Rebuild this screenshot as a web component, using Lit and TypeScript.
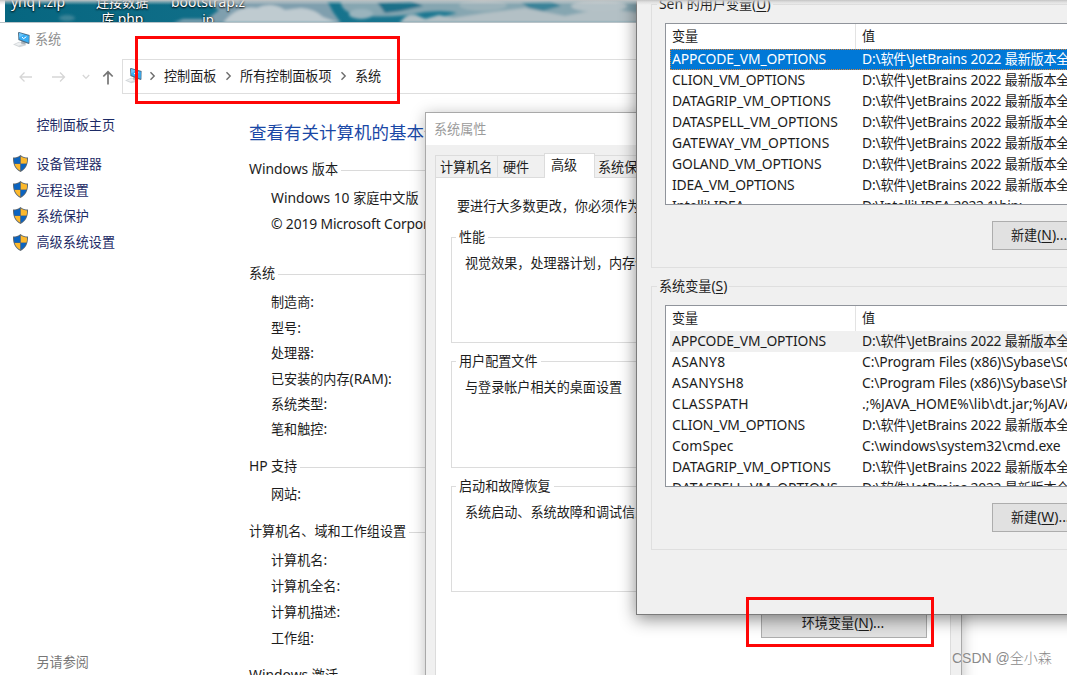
import { LitElement, html, css, svg } from "lit";
import { customElement, property } from "lit/decorators.js";

/* Sets Latin stretches slightly larger than the Chinese characters beside them. */
const mixed = (text: string) =>
  text
    .split(/([\x20-\x7e©]+)/)
    .filter((s) => s)
    .map((s) => (/^[\x20-\x7e©]/.test(s) ? html`<span class="en">${s}</span>` : s));

/* A single line of text whose tracking is adjusted to fill a known width. */
@customElement("text-run")
class TextRun extends LitElement {
  @property({ type: Number }) w = 0;
  @property() text = "";
  static styles = css`
    :host { display: inline-block; white-space: pre; }
    .run { display: inline-block; }
    .en { font-size: 1.06em; line-height: 1; }
  `;
  firstUpdated() {
    const run = this.renderRoot.querySelector(".run") as HTMLElement;
    const fit = () => {
      run.style.letterSpacing = "0px";
      const natural = run.getBoundingClientRect().width;
      if (this.w && this.text.length) run.style.letterSpacing = `${(this.w - natural) / this.text.length}px`;
    };
    fit();
    document.fonts?.ready.then(fit);
  }
  render() {
    return html`<span class="run">${mixed(this.text)}</span>`;
  }
}

const shield = svg`
  <path d="M8.5 1 C6.5 2.8 3.8 3.6 1 3.6 C.8 10 2.6 15 8.5 18 C14.4 15 16.2 10 16 3.6 C13.2 3.6 10.5 2.8 8.5 1Z" fill="#5b6670"/>
  <path d="M8.2 2.3 C6.5 3.7 4.3 4.4 2 4.5 C1.9 6.4 2 8 2.5 9.6 H8.2Z" fill="#0b64c0"/>
  <path d="M8.8 2.3 C10.5 3.7 12.7 4.4 15 4.5 C15.1 6.4 15 8 14.5 9.6 H8.8Z" fill="#fdb92c"/>
  <path d="M2.6 10 H8.2 V16.8 C5.4 15.3 3.5 13 2.6 10Z" fill="#fdb92c"/>
  <path d="M14.4 10 H8.8 V16.8 C11.6 15.3 13.5 13 14.4 10Z" fill="#0b64c0"/>`;

const computer = html`<svg class="pc" viewBox="0 0 18 17">
  <path d="M0 13.4 L6 10.7 L13.5 12.6 L12.6 14.4 L6.4 16.2Z" fill="#d3d7da"/>
  <path d="M2 13.3 L6.3 11.6 L10.4 12.7 L5.6 14.7Z" fill="#eef0f1"/>
  <path d="M8.5 9.7 L13 10.8 L12 13.6 L8 12.6Z" fill="#a9b2b9"/>
  <path d="M5 1.4 L6 1 L16.6 4 L16.4 12.4 L15.6 12.9 L5.4 9Z" fill="#4d6e86"/>
  <path d="M6 2.1 L15.9 4.8 L15.7 11.8 L6.3 8.3Z" fill="#37aef5"/>
  <path d="M6 2.1 L11 3.5 L6.3 6.4Z" fill="#6cc6fa"/>
  <path d="M9 5.9 L10.5 7.7 L13.4 5.7" fill="none" stroke="#fff" stroke-width="1"/>
</svg>`;

const chevron = html`<svg class="chev" viewBox="0 0 7 10"><path d="M1.5 1.2 L5.2 5 L1.5 8.8" /></svg>`;

type Row = [string, number, string, number];
const JB = "D:\\软件\\JetBrains 2022 最新版本全家桶";
const userVars: Row[] = [
  ["APPCODE_VM_OPTIONS", 154, JB, 233],
  ["CLION_VM_OPTIONS", 133, JB, 233],
  ["DATAGRIP_VM_OPTIONS", 159, JB, 233],
  ["DATASPELL_VM_OPTIONS", 166, JB, 233],
  ["GATEWAY_VM_OPTIONS", 157.5, JB, 233],
  ["GOLAND_VM_OPTIONS", 149.5, JB, 233],
  ["IDEA_VM_OPTIONS", 122.5, JB, 233],
  ["IntelliJ IDEA", 72, "D:\\IntelliJ IDEA 2022.1\\bin;", 160],
];
const systemVars: Row[] = [
  ["APPCODE_VM_OPTIONS", 154, JB, 233],
  ["ASANY8", 53.5, "C:\\Program Files (x86)\\Sybase\\SQL", 219],
  ["ASANYSH8", 72, "C:\\Program Files (x86)\\Sybase\\Shared", 238],
  ["CLASSPATH", 77, ".;%JAVA_HOME%\\lib\\dt.jar;%JAVA_", 217],
  ["CLION_VM_OPTIONS", 133, JB, 233],
  ["ComSpec", 61.5, "C:\\windows\\system32\\cmd.exe", 198.5],
  ["DATAGRIP_VM_OPTIONS", 159, JB, 233],
  ["DATASPELL_VM_OPTIONS", 166, JB, 233],
];

@customElement("app-root")
class AppRoot extends LitElement {
  static styles = css`
    :host {
      display: block; position: relative; width: 1067px; height: 675px; overflow: hidden;
      background: #fff; color: #1c1c1c;
      font: 13.1px/20px "Noto Sans", "Noto Sans CJK SC", sans-serif;
      white-space: nowrap;
    }
    * { box-sizing: border-box; }
    svg { display: block; flex: none; }
    u { text-underline-offset: 2px; text-decoration-thickness: 1px; }
    .en { font-size: 1.06em; line-height: 1; white-space: pre; }

    .desktop { position: absolute; left: 5px; top: 0; width: 640px; height: 23px; overflow: hidden; background: #096a86; }
    .sky { width: 640px; height: 23px; }
    .file { position: absolute; top: -6px; text-align: center; line-height: 17px; color: #fff; text-shadow: 0 1px 2px #000, 0 0 2px #0008; }
    .f1 { left: 6px; } .f2 { left: 91px; } .f3 { left: 166px; }
    .topline { position: absolute; left: 0; top: 0; width: 1067px; height: 5px; background: linear-gradient(#c4c4c4, #d0d0d088 40%, #e4e4e400); }

    .panel { position: absolute; left: 0; top: 22px; width: 1067px; height: 653px; background: #fff; border-top: 1px solid #b9c3c8; }
    .title { display: flex; align-items: center; height: 36px; padding: 0 0 4px 13px; gap: 4px; color: #8f8f8f; }
    .pc { width: 18px; height: 17px; }
    .nav { display: flex; height: 35px; }
    .arrows { display: flex; align-items: center; width: 122px; padding: 1px 0 0 18px; fill: none; stroke: #d6d6d6; stroke-width: 1.3; }
    .arrows .r { margin-left: 19px; } .arrows .d { margin-left: 15px; } .arrows .up { margin-left: 12px; stroke: #767676; stroke-width: 1.7; }
    .address { flex: 1; display: flex; align-items: center; border: 1px solid #dedede; padding: 0 0 2px 2px; }
    .chev { width: 7px; height: 10px; fill: none; stroke: #6c6c6c; stroke-width: 1.4; }
    .crumb { margin: 0 8.5px 0 8px; }
    .address .pc { margin-right: 6px; }
    .body { display: flex; }
    .side { width: 249px; padding: 20.5px 0 0 12px; color: #1d2b66; height: 581px; display: flex; flex-direction: column; }
    .home { padding-left: 24.5px; margin-bottom: 16px; }
    .task { display: flex; align-items: center; gap: 7.5px; height: 26.2px; }
    .task svg { width: 17px; height: 19px; }
    .see { margin-top: auto; padding: 0 0 3px 24.5px; color: #777; }
    .main { flex: 1; padding-top: 26px; }
    h1 { margin: 0 0 15px; font-size: 17.5px; font-weight: 400; line-height: 24px; color: #1a48a6; }
    .group { display: flex; align-items: center; height: 20px; gap: 3px; }
    .group::after { content: ""; flex: 1; height: 1px; background: #dadada; margin-top: 3px; }
    .rows { padding: 6px 0 0 22px; }
    .rows.a { line-height: 26.2px; margin-bottom: 26px; }
    .rows.b { line-height: 25.4px; padding-top: 7px; margin-bottom: 13px; }
    .rows.c { line-height: 25.4px; margin-bottom: 13.5px; }
    .rows.d { line-height: 26.2px; margin-bottom: 13px; }

    .props { position: absolute; left: 425px; top: 112px; width: 537px; height: 580px; border: 1px solid #a9a9a9; background: #f0f0f0; box-shadow: 0 2px 14px #0004; display: flex; flex-direction: column; }
    .ptitle { height: 32px; padding: 6px 8px; background: #fff; color: #9b9b9b; }
    .tabs { display: flex; align-items: flex-end; padding: 9px 0 0 9px; height: 32px; }
    .tab { height: 22px; border: 1px solid #dcdcdc; border-bottom: 0; padding-left: 4px; width: 46px; line-height: 23px; }
    .tab.t1 { width: 63px; } .tab.t4 { width: 80px; padding-left: 3px; border-left: 0; }
    .tab.t2 { border-left: 0; border-right: 0; padding-left: 5px; }
    .tab.on { width: 51px; padding-left: 6px; line-height: 22px; background: #fff; margin-bottom: -1px; height: 25px; position: relative; }
    .page { flex: 1; margin: 0 10px 0 9px; border: 1px solid #dcdcdc; background: #fff; padding: 18px 15px; }
    .page p { margin: 0 0 20.5px 6px; }
    .box { border: 1px solid #dcdcdc; height: 106.5px; margin: 0 0 18px; padding: 0 13px; }
    .box .lab { display: block; width: fit-content; margin: -11px 0 6px -9px; padding: 0 3px; background: #fff; }
    .btn { display: block; border: 1px solid #adadad; background: #e1e1e1; text-align: center; color: #1c1c1c; }
    .page .btn { width: 166px; height: 28px; margin-left: auto; margin-right: 8px; line-height: 25px; padding-right: 2px; }

    .env { position: absolute; left: 636px; top: -10px; width: 450px; height: 625px; border: 1px solid #7b7b7b; background: #f0f0f0; box-shadow: 0 4px 16px #0007; padding: 13px 0 0 14px; }
    .set { border: 1px solid #dfdfdf; height: 264px; padding: 0 13px; margin-bottom: 18px; }
    .set .lab { display: block; width: fit-content; margin: -11px 0 9px -8px; padding: 0 2px; background: #f0f0f0; }
    .list { border: 1px solid #90949b; height: 182px; width: 420px; background: #fff; overflow: hidden; display: flex; flex-direction: column; }
    .head, .row { display: flex; flex: none; height: 21px; line-height: 20px; padding-left: 2px; margin-left: 4px; }
    .head { height: 25px; line-height: 25px; }
    .c1 { width: 190px; flex: none; }
    .head .c1 { width: 184px; margin-right: 6px; border-right: 1px solid #e3e3e3; }
    .row.sel { background: #0078d7; color: #fff; outline: 1px dotted #e0863a; outline-offset: -1px; }
    .row.hot { background: #f0f0f0; }
    .set .btn { width: 90px; height: 29px; margin: 16px 0 0 327px; line-height: 26px; text-align: left; padding-left: 18px; }

    .mark { position: absolute; border: 3px solid #fe0606; }
    .m1 { left: 135px; top: 36px; width: 265px; height: 68px; }
    .m2 { left: 746px; top: 597px; width: 188px; height: 50px; }
    .wm { position: absolute; left: 952px; top: 648px; font-size: 14px; color: #8a8a8a; font-family: "Liberation Sans", "Noto Sans CJK SC", sans-serif; font-weight: 300; text-shadow: 0 0 1px #fff; }
  `;

  private list(rows: Row[], cls: string) {
    return html`<div class="list">
      <div class="head"><span class="c1">变量</span><span>值</span></div>
      ${rows.map(
        ([n, nw, v, vw], i) => html`<div class="row ${i === 0 ? cls : ""}">
          <span class="c1"><text-run .w=${nw} .text=${n}></text-run></span><text-run .w=${vw} .text=${v}></text-run>
        </div>`
      )}
    </div>`;
  }

  private run(text: string, w: number) {
    return html`<text-run .w=${w} .text=${text}></text-run>`;
  }

  private rows(cls: string, items: string[]) {
    return html`<div class="rows ${cls}">${items.map((t) => html`<div>${mixed(t)}</div>`)}</div>`;
  }

  private box(label: string, text: string) {
    return html`<div class="box"><span class="lab">${label}</span>${text}</div>`;
  }

  private key(label: string, letter: string, tail = "") {
    return html`${mixed(label)}<span class="en">(<u>${letter}</u>)${tail}</span>`;
  }

  render() {
    return html`
      <div class="desktop">
        <svg class="sky" viewBox="0 0 640 23">
          <defs>
            <filter id="soft" x="-10%" y="-50%" width="120%" height="200%"><feGaussianBlur stdDeviation="1.6" /></filter>
            <linearGradient id="sea" x1="0" x2="1"><stop offset="0" stop-color="#066680" /><stop offset="1" stop-color="#257f99" /></linearGradient>
          </defs>
          <rect width="640" height="23" fill="url(#sea)" />
          <g filter="url(#soft)">
            <path d="M196 0 L322 0 L328 12 L336 23 L168 23 L178 19 L202 19 L214 10Z" fill="#7f9fae" />
            <path d="M218 23 Q232 5 252 8 Q266 1 280 10 L296 8 Q310 9 318 17 L334 23Z" fill="#bfcbd0" />
            <path d="M336 0 H640 V23 H394 Q400 14 412 16 L424 20 L452 13 Q440 10 420 12 Q390 18 362 16 Q334 14 336 0Z" fill="#86a6b1" />
            <path d="M396 23 Q400 13 411 15 L420 19 L434 15 L448 18 L480 13 L520 8 L560 16 L600 8 L640 14 V23Z" fill="#b3c0c5" />
            <ellipse cx="478" cy="5" rx="24" ry="6" fill="#9cb2ba" />
            <ellipse cx="594" cy="6" rx="28" ry="6" fill="#b4c1c6" />
            <ellipse cx="356" cy="14" rx="12" ry="5" fill="#9ab4bd" />
            <path d="M516 2 L545 0 L556 6 L538 11 L524 8Z" fill="#3a8399" />
            <path d="M372 2 L406 0 L418 6 L396 11 L380 13Z" fill="#1c7089" />
            <ellipse cx="62" cy="18" rx="8" ry="3" fill="#3e8498" />
          </g>
        </svg>
        <div class="file f1">${this.run("yhq1.zip", 54)}</div>
        <div class="file f2">连接数据<br />${this.run("库.php", 42)}</div>
        <div class="file f3">${this.run("bootstrap.z", 74)}<br />ip</div>
      </div>

      <div class="panel">
        <div class="title">${computer}<span>系统</span></div>
        <div class="nav">
          <div class="arrows">
            <svg width="15" height="12" viewBox="0 0 15 12"><path d="M14 6 H2 M6.5 1.5 L2 6 L6.5 10.5" /></svg>
            <svg class="r" width="15" height="12" viewBox="0 0 15 12"><path d="M0 6 H12.5 M8 1.5 L12.5 6 L8 10.5" /></svg>
            <svg class="d" width="8" height="6" viewBox="0 0 8 6"><path d="M.8 1 L4 4.4 L7.2 1" /></svg>
            <svg class="up" width="12" height="15" viewBox="0 0 12 15"><path d="M6 14.5 V2 M1.3 6.5 L6 1.8 L10.7 6.5" /></svg>
          </div>
          <div class="address">
            ${computer}${chevron}<span class="crumb">控制面板</span>${chevron}<span class="crumb">所有控制面板项</span>${chevron}<span class="crumb">系统</span>
          </div>
        </div>
        <div class="body">
          <div class="side">
            <div class="home">控制面板主页</div>
            ${["设备管理器", "远程设置", "系统保护", "高级系统设置"].map(
              (t) => html`<div class="task"><svg viewBox="0 0 17 19">${shield}</svg><span>${t}</span></div>`
            )}
            <div class="see">另请参阅</div>
          </div>
          <div class="main">
            <h1>查看有关计算机的基本信息</h1>
            <div class="group">${this.run("Windows 版本", 89)}</div>
            <div class="rows a">
              <div>${this.run("Windows 10 家庭中文版", 147.5)}</div>
              <div>${this.run("© 2019 Microsoft Corporation", 190)}</div>
            </div>
            <div class="group">系统</div>
            ${this.rows("b", ["制造商:", "型号:", "处理器:", "已安装的内存(RAM):", "系统类型:", "笔和触控:"])}
            <div class="group">${this.run("HP 支持", 48)}</div>
            ${this.rows("c", ["网站:"])}
            <div class="group">计算机名、域和工作组设置</div>
            ${this.rows("d", ["计算机名:", "计算机全名:", "计算机描述:", "工作组:"])}
            <div class="group">${this.run("Windows 激活", 89)}</div>
          </div>
        </div>
      </div>

      <div class="props">
        <div class="ptitle">系统属性</div>
        <div class="tabs">
          <div class="tab t1">计算机名</div>
          <div class="tab t2">硬件</div>
          <div class="tab on">高级</div>
          <div class="tab t4">系统保护</div>
        </div>
        <div class="page">
          <p>要进行大多数更改，你必须作为管理员登录。</p>
          ${this.box("性能", "视觉效果，处理器计划，内存使用，以及虚拟内存")}
          ${this.box("用户配置文件", "与登录帐户相关的桌面设置")}
          ${this.box("启动和故障恢复", "系统启动、系统故障和调试信息")}
          <span class="btn">${this.key("环境变量", "N", "...")}</span>
        </div>
      </div>

      <div class="env">
        <div class="set">
          <span class="lab">${this.key("Sen 的用户变量", "U")}</span>
          ${this.list(userVars, "sel")}
          <span class="btn">${this.key("新建", "N", "...")}</span>
        </div>
        <div class="set">
          <span class="lab">${this.key("系统变量", "S")}</span>
          ${this.list(systemVars, "hot")}
          <span class="btn">${this.key("新建", "W", "...")}</span>
        </div>
      </div>

      <div class="topline"></div>
      <div class="mark m1"></div>
      <div class="mark m2"></div>
      <div class="wm">CSDN @全小森</div>
    `;
  }
}
